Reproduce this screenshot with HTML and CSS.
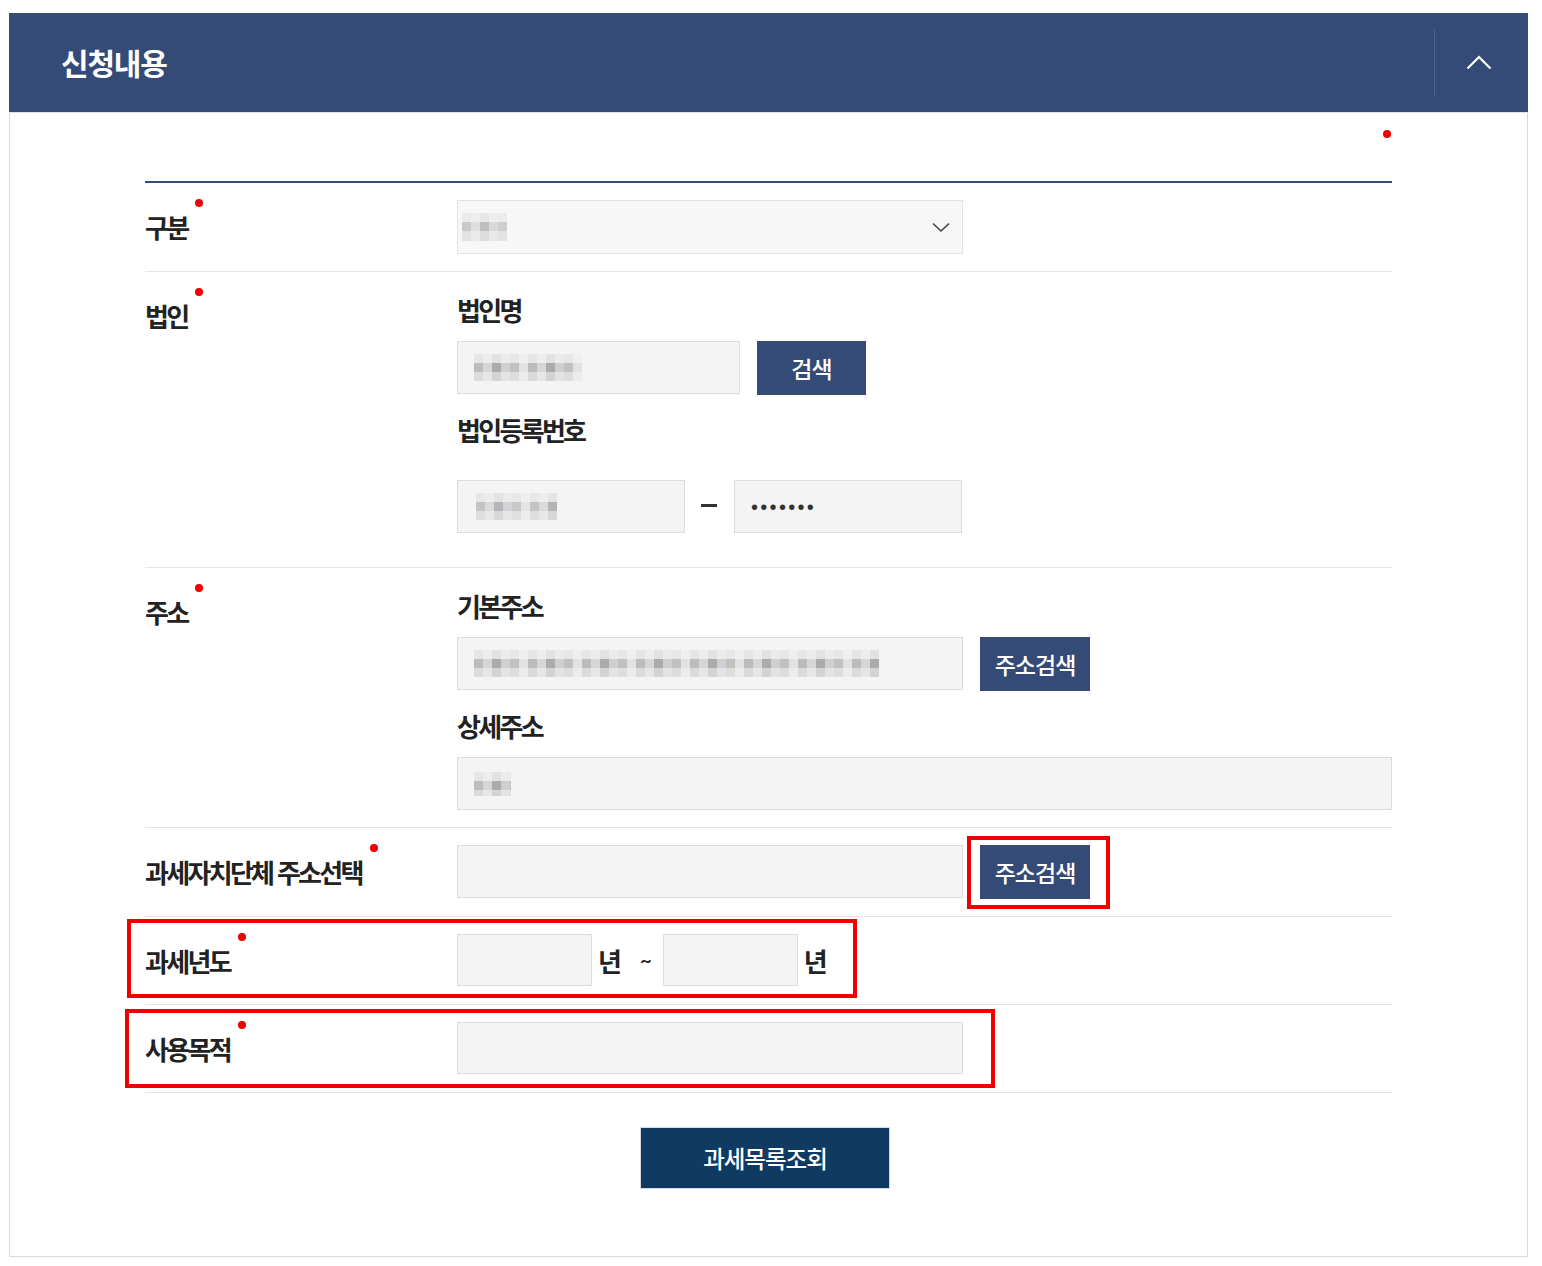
FILE: index.html
```html
<!DOCTYPE html>
<html lang="ko">
<head>
    <meta charset="UTF-8">
    <meta name="viewport" content="width=device-width, initial-scale=1.0">
    <title>신청내용</title>
    <link rel="stylesheet" href="styles.css">
</head>
<body>
    <div class="page">
        <section class="panel">
            <div class="panel-head">
                <h2 class="panel-title">신청내용</h2>
                <button type="button" class="panel-toggle" aria-label="접기">
                    <svg width="26" height="16" viewBox="0 0 26 16"><path d="M1.5 14.5 L13 3 L24.5 14.5" fill="none" stroke="#fff" stroke-width="2.2"/></svg>
                </button>
            </div>

            <div class="panel-body">
                <div class="required-note"><span class="dot"></span></div>

                <div class="form-table">
                    <div class="form-row">
                        <div class="form-label"><span class="req">구분</span></div>
                        <div class="form-cell">
                            <div class="select">
                                <span class="mosaic mosaic-type"></span>
                                <svg width="18" height="11" viewBox="0 0 18 11"><path d="M1 1.5 L9 9 L17 1.5" fill="none" stroke="#444" stroke-width="1.6"/></svg>
                            </div>
                        </div>
                    </div>

                    <div class="form-row">
                        <div class="form-label"><span class="req">법인</span></div>
                        <div class="form-cell">
                            <div class="field">
                                <div class="sub-title">법인명</div>
                                <div class="inline">
                                    <div class="input input-name"><span class="mosaic mosaic-name"></span></div>
                                    <button type="button" class="btn btn-search">검색</button>
                                </div>
                            </div>
                            <div class="field field-regno">
                                <div class="sub-title">법인등록번호</div>
                                <div class="inline">
                                    <div class="input input-reg"><span class="mosaic mosaic-reg"></span></div>
                                    <span class="dash"></span>
                                    <div class="input input-reg"><span class="secret">•••••••</span></div>
                                </div>
                            </div>
                        </div>
                    </div>

                    <div class="form-row">
                        <div class="form-label"><span class="req">주소</span></div>
                        <div class="form-cell">
                            <div class="field">
                                <div class="sub-title">기본주소</div>
                                <div class="inline">
                                    <div class="input"><span class="mosaic mosaic-addr"></span></div>
                                    <button type="button" class="btn btn-addr">주소검색</button>
                                </div>
                            </div>
                            <div class="field">
                                <div class="sub-title">상세주소</div>
                                <div class="input input-full"><span class="mosaic mosaic-detail"></span></div>
                            </div>
                        </div>
                    </div>

                    <div class="form-row">
                        <div class="form-label"><span class="req">과세자치단체 주소선택</span></div>
                        <div class="form-cell">
                            <div class="inline">
                                <input type="text" class="input">
                                <span class="marked">
                                    <button type="button" class="btn btn-addr">주소검색</button>
                                </span>
                            </div>
                        </div>
                    </div>

                    <div class="form-row marked-year">
                        <div class="form-label"><span class="req">과세년도</span></div>
                        <div class="form-cell">
                            <div class="year-range">
                                <input type="text" class="input input-year">
                                <span class="unit">년</span>
                                <span class="tilde">~</span>
                                <input type="text" class="input input-year">
                                <span class="unit">년</span>
                            </div>
                        </div>
                    </div>

                    <div class="form-row marked-purpose">
                        <div class="form-label"><span class="req">사용목적</span></div>
                        <div class="form-cell">
                            <input type="text" class="input input-short">
                        </div>
                    </div>
                </div>

                <div class="form-actions">
                    <button type="button" class="btn-submit">과세목록조회</button>
                </div>
            </div>
        </section>
    </div>
</body>
</html>
```

FILE: styles.css
```css
:root {
    --navy: #344b78;
    --deep-navy: #0f3a62;
    --text: #222;
    --line: #e4e4e4;
    --field-bg: #f4f4f4;
    --field-line: #dcdcdc;
    --mark: #f20000;
}

*,
*::before,
*::after {
    box-sizing: border-box;
    margin: 0;
    padding: 0;
}

body {
    font-family: "Noto Sans CJK KR", "Noto Sans", sans-serif;
    color: var(--text);
    background: #fff;
}

.page {
    padding: 13px 14px 0 9px;
}

.panel {
    width: 1519px;
}

.panel-head {
    display: flex;
    align-items: center;
    height: 99px;
    background: var(--navy);
}

.panel-title {
    flex: 1;
    padding-left: 52px;
    padding-bottom: 2px;
    color: #fff;
    font-size: 30px;
    font-weight: 700;
    letter-spacing: -1.2px;
}

.panel-toggle {
    width: 94px;
    height: 67px;
    margin: 17px 0 15px;
    align-self: stretch;
    border: none;
    border-left: 1px solid rgba(255, 255, 255, 0.14);
    background: transparent;
    display: flex;
    align-items: center;
    justify-content: center;
    padding-right: 6px;
    padding-bottom: 4px;
}

.panel-body {
    border: 1px solid #d9d9d9;
    border-top-color: #e2e2e2;
    padding: 0 135px 67px;
}

.required-note {
    display: flex;
    justify-content: flex-end;
    margin: 17px 0 43px;
    padding-right: 1px;
}

.dot {
    width: 8px;
    height: 8px;
    border-radius: 50%;
    background: var(--mark);
}

.form-table {
    border-top: 2px solid var(--navy);
}

.form-row {
    display: grid;
    grid-template-columns: 312px 1fr;
    padding: 17px 0;
    border-bottom: 1px solid var(--line);
    position: relative;
}

.form-label {
    line-height: 52px;
    padding-top: 1px;
    font-size: 26px;
    font-weight: 700;
    letter-spacing: -2.7px;
}

.req {
    display: inline-block;
    position: relative;
}

.req::after {
    content: "";
    position: absolute;
    top: -2px;
    right: -16px;
    width: 8px;
    height: 8px;
    border-radius: 50%;
    background: var(--mark);
}

.sub-title {
    line-height: 42px;
    margin-bottom: 10px;
    font-size: 26px;
    font-weight: 700;
    letter-spacing: -2.7px;
}

.field + .field {
    margin-top: 14px;
}

.field-regno .sub-title {
    margin-bottom: 29px;
}

.field-regno {
    margin-bottom: 17px;
}

.inline {
    display: flex;
    align-items: flex-start;
    gap: 17px;
}

.input {
    display: flex;
    align-items: center;
    width: 506px;
    height: 53px;
    padding: 0 16px;
    background: var(--field-bg);
    border: 1px solid var(--field-line);
    font-family: inherit;
    font-size: 16px;
}

.input-name {
    width: 283px;
}

.input-reg {
    width: 228px;
}

.input-full {
    width: 100%;
}

.input-short {
    height: 52px;
}

.input-year {
    width: 135px;
    height: 52px;
}

.select {
    display: flex;
    align-items: center;
    justify-content: space-between;
    width: 506px;
    height: 54px;
    padding: 0 12px 0 4px;
    background: #f7f7f7;
    border: 1px solid #e3e3e3;
}

/* blurred personal data */
.mosaic {
    display: inline-block;
    height: 27px;
    background:
        linear-gradient(180deg, rgba(244, 244, 244, 0.75) 0 9px, transparent 9px 18px, rgba(244, 244, 244, 0.55) 18px),
        repeating-linear-gradient(90deg, #bcbcbc 0 9px, #d6d6d6 9px 18px, #ababab 18px 27px, #cdcfd3 27px 36px, #c3c1bf 36px 45px, #e2e2e2 45px 54px);
}

.mosaic-type {
    width: 45px;
    height: 28px;
    opacity: 0.75;
}

.mosaic-name {
    width: 108px;
}

.mosaic-reg {
    width: 81px;
    margin-left: 2px;
    opacity: 0.85;
}

.mosaic-addr {
    width: 405px;
}

.mosaic-detail {
    width: 37px;
    height: 24px;
}

.secret {
    font-family: "Liberation Sans", sans-serif;
    font-size: 20px;
    letter-spacing: 2.3px;
    color: #333;
    padding-top: 2px;
}

.dash {
    width: 16px;
    height: 3px;
    background: #333;
}

.field-regno .inline {
    gap: 0;
}

.field-regno .dash {
    margin: 24px 17px 0 16px;
}

.btn {
    height: 54px;
    border: none;
    background: var(--navy);
    color: #fff;
    font-family: inherit;
    font-size: 23px;
    font-weight: 500;
    letter-spacing: -1px;
}

.btn-search {
    width: 109px;
}

.btn-addr {
    width: 110px;
}

.year-range {
    display: flex;
    align-items: center;
    height: 52px;
}

.unit {
    margin-left: 6px;
    font-size: 26px;
    font-weight: 700;
}

.tilde {
    margin: 0 11px 0 18px;
    font-size: 20px;
    font-weight: 700;
}

/* red annotation frames */
.marked {
    position: relative;
    display: block;
}

.marked::after,
.marked-year::after,
.marked-purpose::after {
    content: "";
    position: absolute;
    border: 4px solid var(--mark);
    pointer-events: none;
}

.marked::after {
    top: -9px;
    left: -13px;
    right: -20px;
    bottom: -10px;
}

.marked-year::after {
    top: 2px;
    left: -18px;
    width: 730px;
    height: 79px;
}

.marked-purpose::after {
    top: 4px;
    left: -20px;
    width: 870px;
    height: 79px;
}

.form-actions {
    display: flex;
    justify-content: center;
    margin-top: 34px;
    padding-right: 7px;
}

.btn-submit {
    width: 250px;
    height: 62px;
    border: 1px solid #d5dbe2;
    background: var(--deep-navy);
    color: #fff;
    font-family: inherit;
    font-size: 23.5px;
    font-weight: 500;
    letter-spacing: -1px;
}
```
